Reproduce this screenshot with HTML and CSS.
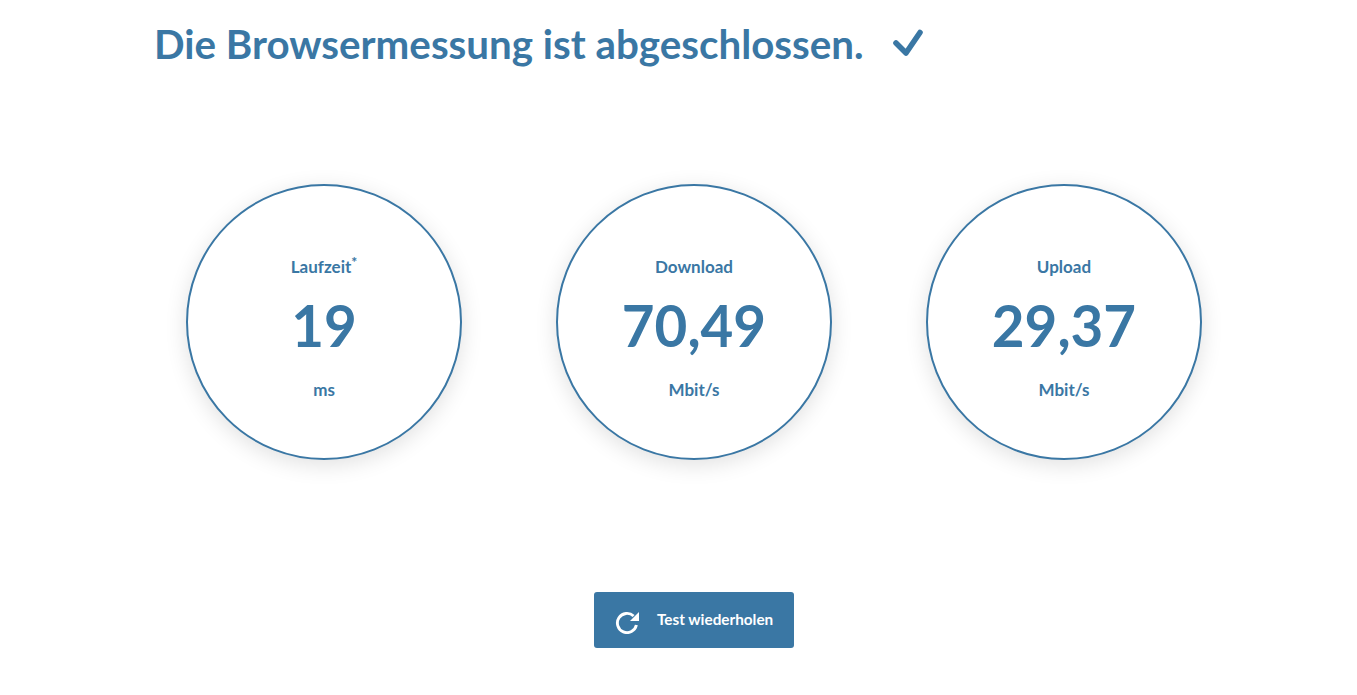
FILE: index.html
```
<!DOCTYPE html>
<html lang="de">
<head>
  <meta charset="utf-8">
  <title>Browsermessung</title>
  <link rel="stylesheet" href="styles.css">
</head>
<body>
  <main class="page">
    <h1 class="title">
      <span>Die Browsermessung ist abgeschlossen.</span>
      <svg class="title-check" viewBox="0 0 32 28" width="32" height="28" aria-hidden="true">
        <path d="M4 14 L14 24 L28 3.5" fill="none" stroke="currentColor" stroke-width="5.6" stroke-linecap="round" stroke-linejoin="round"/>
      </svg>
    </h1>

    <section class="results">
      <div class="dial">
        <div class="dial-label">Laufzeit<sup class="dial-mark">*</sup></div>
        <div class="dial-value">19</div>
        <div class="dial-unit">ms</div>
      </div>
      <div class="dial">
        <div class="dial-label">Download</div>
        <div class="dial-value">70,49</div>
        <div class="dial-unit">Mbit/s</div>
      </div>
      <div class="dial">
        <div class="dial-label">Upload</div>
        <div class="dial-value">29,37</div>
        <div class="dial-unit">Mbit/s</div>
      </div>
    </section>

    <div class="actions">
      <a class="btn" href="#">
        <svg class="btn-icon" viewBox="0 0 24 24" width="24" height="24" aria-hidden="true">
          <path d="M21.4 15 A9.6 9.6 0 1 1 18.6 6" fill="none" stroke="currentColor" stroke-width="2.9"/>
          <path d="M24 2 V11 H15 Z" fill="currentColor"/>
        </svg>
        <span class="btn-text">Test wiederholen</span>
      </a>
    </div>
  </main>
</body>
</html>
```

FILE: styles.css
```
* { box-sizing: border-box; }

body {
  margin: 0;
  background: #fff;
  color: #3a77a4;
  font-family: "Lato", "Noto Sans", sans-serif;
}

.page {
  width: 1110px;
  margin-left: 139px;
}

.title {
  display: flex;
  align-items: center;
  gap: 28px;
  height: 86px;
  margin: 0;
  padding-left: 15px;
  font-size: 40.3px;
  font-weight: 700;
}

.results {
  display: grid;
  grid-template-columns: repeat(3, 370px);
  margin-top: 98px;
}

.dial {
  display: flex;
  flex-direction: column;
  align-items: center;
  justify-self: center;
  width: 276px;
  height: 276px;
  padding-top: 71px;
  border: 2px solid #3a77a4;
  border-radius: 50%;
  background: #fff;
  box-shadow: 0 5px 22px rgba(0, 0, 0, 0.12);
}

.dial-label,
.dial-unit {
  font-size: 17px;
  font-weight: 700;
  line-height: 20px;
}

.dial-mark {
  font-size: 14px;
  font-weight: 900;
  line-height: 0;
  vertical-align: 6px;
}

.dial-value {
  margin-top: 13px;
  font-size: 56.5px;
  font-weight: 700;
  line-height: 70px;
}

.dial-unit {
  margin-top: 20px;
}

.actions {
  display: flex;
  justify-content: center;
  margin-top: 132px;
}

.btn {
  display: flex;
  align-items: center;
  gap: 18px;
  width: 200px;
  height: 56px;
  padding-left: 21px;
  border-radius: 3px;
  background: #3a77a4;
  color: #fff;
  font-size: 15.3px;
  font-weight: 700;
  text-decoration: none;
}

.btn-icon {
  flex: none;
  margin-top: 4px;
}

.btn-text {
  margin-bottom: 3px;
}
```
